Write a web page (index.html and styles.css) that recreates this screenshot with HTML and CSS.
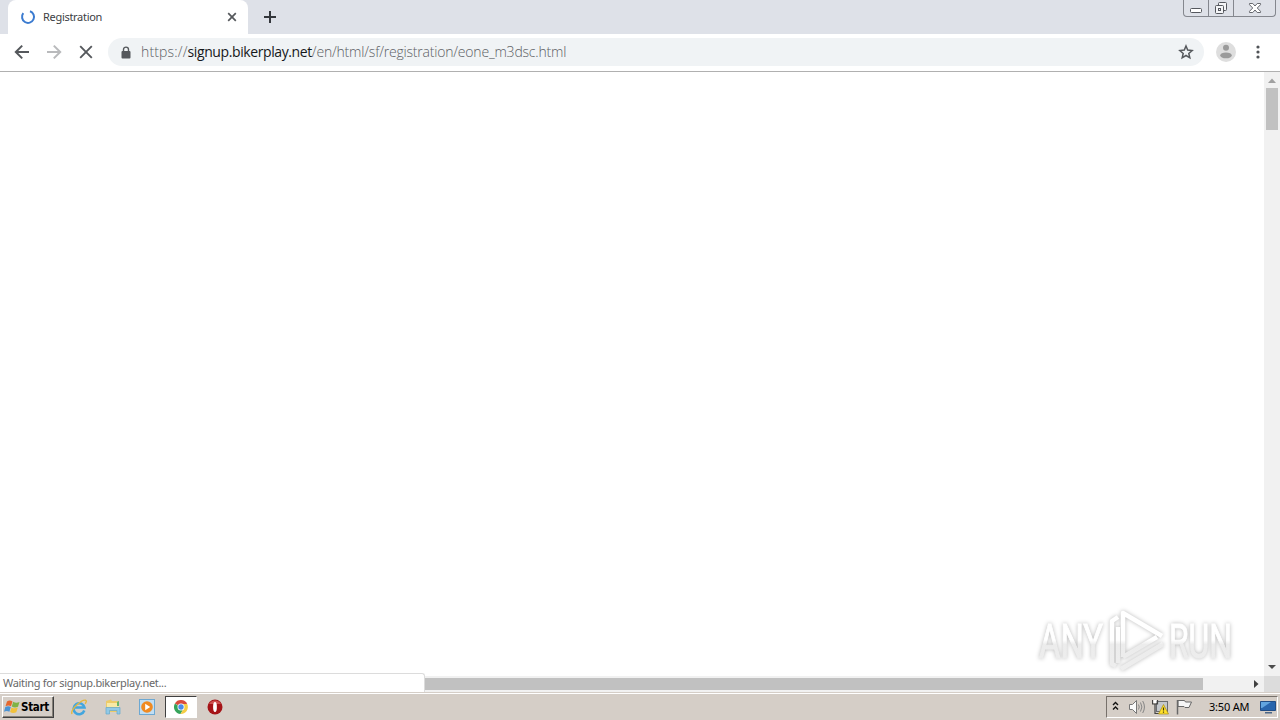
FILE: index.html
```
<!DOCTYPE html>
<html lang="en">
<head>
    <meta charset="UTF-8">
    <title>Registration</title>
    <link rel="stylesheet" href="styles.css">
</head>
<body>
    <div class="tabstrip">
        <div class="tab">
            <svg class="spinner" width="16" height="16" viewBox="0 0 16 16"><path d="M10 2.2A6 6 0 1 1 3.3 4.2" fill="none" stroke="#3b7bd0" stroke-width="2"/></svg>
            <span class="tab-title">Registration</span>
            <svg width="10" height="10" viewBox="0 0 10 10"><path d="M1.2 1.2l7.6 7.6M8.8 1.2L1.2 8.8" stroke="#55585c" stroke-width="1.7"/></svg>
        </div>
        <svg class="new-tab" width="14" height="14" viewBox="0 0 14 14"><path d="M7 1v12M1 7h12" stroke="#34373c" stroke-width="2"/></svg>
        <div class="window-buttons">
            <span class="win min"><svg width="14" height="16" viewBox="0 0 14 16"><rect x="1.5" y="8.5" width="11" height="4" rx="1" fill="#fff" stroke="#55585e"/></svg></span>
            <span class="win max"><svg width="14" height="16" viewBox="0 0 14 16"><g fill="#f4f5f7" stroke="#55585e"><rect x="4.5" y="2.5" width="8" height="8" rx="1"/><rect x="1.5" y="5.5" width="8" height="8" rx="1"/><rect x="4.5" y="8.5" width="2" height="2"/></g></svg></span>
            <span class="win close"><svg width="14" height="16" viewBox="0 0 14 16"><path d="M1.5 3.5h3.3L7 6l2.2-2.5h3.3v1.2L9.3 8l3.2 3.3v1.2H9.2L7 10l-2.2 2.5H1.5v-1.2L4.7 8 1.5 4.7z" fill="#fff" stroke="#65686e"/></svg></span>
        </div>
    </div>

    <div class="toolbar">
        <svg class="nav" width="16" height="16" viewBox="0 0 16 16"><path d="M15 8H2M8.2 1.6L1.8 8l6.4 6.4" fill="none" stroke="#55585c" stroke-width="2"/></svg>
        <svg class="nav" width="16" height="16" viewBox="0 0 16 16"><path d="M1 8h13M7.8 1.6L14.2 8l-6.4 6.4" fill="none" stroke="#b9babc" stroke-width="2"/></svg>
        <svg class="nav" width="16" height="16" viewBox="0 0 16 16"><path d="M2.2 2.2l11.6 11.6M13.8 2.2L2.2 13.8" stroke="#55585c" stroke-width="1.9"/></svg>
        <div class="address">
            <svg class="lock" width="10" height="13" viewBox="0 0 10 13"><rect x="0.5" y="5" width="9" height="7.5" rx="1" fill="#55585c"/><path d="M2.5 5.5V3.6a2.5 2.5 0 0 1 5 0v1.9" fill="none" stroke="#55585c" stroke-width="1.4"/></svg>
            <div class="url"><span class="scheme">https://</span><span class="host">signup.bikerplay.net</span><span class="path">/en/html/sf/registration/eone_m3dsc.html</span></div>
            <svg width="16" height="16" viewBox="0 0 16 16"><path d="M8 2l1.7 4.1 4.4.4-3.3 2.9 1 4.4L8 11.5l-3.8 2.3 1-4.4-3.3-2.9 4.4-.4z" fill="none" stroke="#55585c" stroke-width="1.5"/></svg>
        </div>
        <svg class="avatar" width="20" height="20" viewBox="0 0 20 20"><circle cx="10" cy="10" r="10" fill="#dedede"/><circle cx="10" cy="5.8" r="3" fill="#9a9a9a"/><ellipse cx="10" cy="13.4" rx="5.8" ry="2.9" fill="#9a9a9a"/></svg>
        <svg class="menu" width="4" height="14" viewBox="0 0 4 14"><g fill="#505357"><circle cx="2" cy="2" r="1.6"/><circle cx="2" cy="7" r="1.6"/><circle cx="2" cy="12" r="1.6"/></g></svg>
    </div>

    <div class="content">
        <div class="page">
            <svg class="watermark" width="220" height="72" viewBox="0 0 220 72">
                <defs>
                    <linearGradient id="fade" gradientUnits="userSpaceOnUse" x1="0" y1="0" x2="0" y2="72">
                        <stop offset="0.46" stop-color="#fff"/>
                        <stop offset="0.52" stop-color="#ececec"/>
                        <stop offset="1" stop-color="#eee"/>
                    </linearGradient>
                </defs>
                <g class="mark-text" fill="url(#fade)" stroke="url(#fade)">
                    <text x="8" y="51" textLength="64" lengthAdjust="spacingAndGlyphs">ANY</text>
                    <text x="138" y="51" textLength="63" lengthAdjust="spacingAndGlyphs">RUN</text>
                </g>
                <g class="mark-play" stroke="url(#fade)">
                    <path d="M92 50V6l39 23"/>
                    <path d="M87 10l-6 4v43l4 2"/>
                    <path d="M92 50l34-20"/>
                    <path d="M90 62l42-25M87 56V20"/>
                </g>
            </svg>
        </div>
        <div class="vscroll">
            <svg width="16" height="16" viewBox="0 0 16 16"><path d="M4 11l4-4.5 4 4.5z" fill="#a0a0a0"/></svg>
            <div class="vthumb"></div>
            <svg class="down" width="16" height="16" viewBox="0 0 16 16"><path d="M4 5l4 4 4-4z" fill="#4c4c4c"/></svg>
        </div>
        <div class="hscroll">
            <div class="status">Waiting for signup.bikerplay.net...</div>
            <div class="hthumb"></div>
            <svg class="right" width="16" height="16" viewBox="0 0 16 16"><path d="M6 4l4.5 4L6 12z" fill="#404040"/></svg>
        </div>
        <div class="corner"></div>
    </div>

    <div class="taskbar">
        <div class="start">
            <svg width="17" height="16" viewBox="0 0 17 16"><path d="M3 2.4c2-1.3 3.8-1 5.5 0L7 7.2C5.3 6.2 3.500 6.200 1.500 7.200z" fill="#e5672d"/><path d="M9.200 2.800c2 1.100 4 1.200 6.300.1L14 7.700c-2.200 1-4.200.9-6.200-.2z" fill="#7fb345"/><path d="M1.300 8c2-1 3.800-1 5.500 0l-1.400 4.800c-1.800-1-3.600-1-5.400 0z" fill="#4b93d3"/><path d="M7.500 8.400c2 1.100 4 1.200 6.300.1l-1.500 4.800c-2.200 1-4.200.9-6.200-.2z" fill="#f2c13b"/></svg>
            <span>Start</span>
        </div>
        <div class="quick">
            <svg width="18" height="18" viewBox="0 0 18 18"><path d="M14.300 12.500A5.500 5.500 0 1 1 14.500 9.600H5" fill="none" stroke="#43a6de" stroke-width="2.500"/><path d="M2 16C0 12 11.500 1.500 15.500 2.200c1.500.5.600 2.300-.3 3.600" fill="none" stroke="#e5b83e" stroke-width="1.400"/></svg>
        </div>
        <div class="quick">
            <svg width="18" height="18" viewBox="0 0 18 18"><path d="M2 3l5-1.500 1 1.500h7v11H2z" fill="#eccb69"/><path d="M3 5h12v4H3z" fill="#f8e9a6"/><path d="M2 16V9.500h14V16h-3v-3.500H5.500V16z" fill="#91c9e7" stroke="#64a9cd" stroke-width=".7"/><path d="M13 4l2-1v5h-2z" fill="#67b56a"/></svg>
        </div>
        <div class="quick">
            <svg width="18" height="18" viewBox="0 0 18 18"><rect x="1.500" y="1.500" width="15" height="15" fill="#c1def3" stroke="#6da8d2"/><circle cx="9" cy="9" r="5.800" fill="#f08a21"/><path d="M7.200 5.700l5 3.300-5 3.300z" fill="#fff"/></svg>
        </div>
        <div class="quick active">
            <svg width="16" height="16" viewBox="0 0 16 16"><path d="M8 8L1.900 4.500A7 7 0 0 1 14.200 5z" fill="#da4b3c"/><path d="M8 8h-1L1.900 4.500A7 7 0 0 0 7.500 15L11 9z" fill="#36a45b"/><path d="M8 5h6.200A7 7 0 0 1 7.500 15L11 9z" fill="#f5cd45"/><circle cx="8" cy="8" r="3.500" fill="#fff"/><circle cx="8" cy="8" r="2.700" fill="#4b8bea"/></svg>
        </div>
        <div class="quick">
            <svg width="16" height="16" viewBox="0 0 16 16"><circle cx="8" cy="8" r="7.500" fill="#a51317"/><path d="M2 5a7 7 0 0 1 12 0z" fill="#cf5050"/><ellipse cx="8" cy="8" rx="1.900" ry="5" fill="#fff"/></svg>
        </div>
        <div class="tray">
            <svg class="chevrons" width="7" height="10" viewBox="0 0 7 10"><path d="M1 4l2.500-2.500L6 4M1 8.500L3.500 6 6 8.500" fill="none" stroke="#111" stroke-width="1.400"/></svg>
            <svg class="volume" width="18" height="16" viewBox="0 0 18 16"><path d="M1.500 5.500h3L8.500 1.500v13l-4-4h-3z" fill="#fafafa" stroke="#777"/><path d="M10.500 5.500q1.500 2.500 0 5M12.500 3.500q2.800 4.500 0 9M14.700 2q3.500 6 0 12" fill="none" stroke="#858585"/></svg>
            <svg class="network" width="17" height="16" viewBox="0 0 17 16"><rect x="4.500" y="2.500" width="11" height="10" fill="#c4c8cc" stroke="#696c70"/><path d="M.5 1v4h5V1M3 5v9.500h5" fill="none" stroke="#444" stroke-width="1.200"/><path d="M1.500 1h3v3h-3z" fill="#fff"/><path d="M11.500 5.500l5 9.500h-10z" fill="#ffe12b" stroke="#a88d17" stroke-width=".7"/><path d="M11.500 8.500v3M11.500 12.500v1.300" stroke="#453a0c" stroke-width="1.200"/></svg>
            <svg class="flag" width="17" height="16" viewBox="0 0 17 16"><path d="M2 1.500h6.500l1 1.500h6l-2.500 5.500H9L8 7.500H2z" fill="#f6f6f6" stroke="#686868"/><path d="M1.500 1v14.500" stroke="#686868" stroke-width="1.500"/></svg>
            <span class="clock">3:50 AM</span>
            <svg class="desktop" width="16" height="14" viewBox="0 0 16 14"><path d="M.5 1.500h15v9H.5z" fill="#2865ad" stroke="#214d85"/><path d="M1 2h10L2 8H1z" fill="#61a4df"/><path d="M5 12h7v1.500H5z" fill="#4b6686"/></svg>
        </div>
    </div>
</body>
</html>
```
FILE: styles.css
```
* {
    box-sizing: border-box;
}
body {
    margin: 0;
    width: 1280px;
    height: 720px;
    overflow: hidden;
    display: flex;
    flex-direction: column;
    background: #fff;
    font-family: "DejaVu Sans Condensed", "DejaVu Sans", sans-serif;
    font-size: 11px;
    color: #3c4043;
}
svg {
    display: block;
    flex: none;
}
.tabstrip {
    height: 34px;
    flex: none;
    display: flex;
    background: #dee1e8;
    padding-left: 8px;
}
.tab {
    width: 240px;
    display: flex;
    align-items: center;
    padding: 0 11px 0 12px;
    background: #fff;
    border-radius: 8px 8px 0 0;
}
.tab-title {
    flex: 1;
    margin-left: 7px;
    padding-bottom: 2px;
    font-family: "Noto Sans", sans-serif;
    font-size: 11px;
    letter-spacing: -0.3px;
}
.new-tab {
    margin: 10px 0 0 15px;
}
.window-buttons {
    display: flex;
    height: 17px;
    margin: 0 4px 0 auto;
    border: 1px solid #84878e;
    border-top: none;
    border-radius: 0 0 4px 4px;
}
.win {
    display: flex;
    justify-content: center;
    border-right: 1px solid #84878e;
}
.min {
    width: 25px;
}
.max {
    width: 25px;
}
.close {
    width: 41px;
    border-right: none;
}
.toolbar {
    height: 38px;
    flex: none;
    display: flex;
    align-items: center;
    padding: 0 20px 1px 14px;
    border-bottom: 1px solid #b0b0b0;
}
.nav {
    margin-right: 16px;
}
.address {
    flex: 1;
    height: 28px;
    display: flex;
    align-items: center;
    margin-left: -2px;
    padding: 0 10px 0 13px;
    border-radius: 14px;
    background: #f0f3f5;
}
.url {
    flex: 1;
    margin-left: 10px;
    padding-bottom: 2px;
    font-family: "Open Sans", sans-serif;
    font-size: 14px;
    font-weight: 300;
    white-space: nowrap;
    color: #5c6064;
}
.scheme {
    letter-spacing: 0.15px;
}
.host {
    color: #15171a;
    font-weight: 400;
    letter-spacing: -0.4px;
}
.path {
    letter-spacing: -0.2px;
}
.avatar {
    margin-left: 12px;
}
.menu {
    margin-left: 20px;
}
.content {
    height: 620px;
    flex: none;
    display: grid;
    grid-template-columns: 1264px 16px;
    grid-template-rows: 604px 16px;
}
.page {
    position: relative;
    background: #fff;
}
.watermark {
    position: absolute;
    left: 1031px;
    top: 535px;
    filter: drop-shadow(0 0 2px rgba(0, 0, 0, 0.28));
}
.mark-text {
    font-family: "Roboto", sans-serif;
    font-size: 49px;
    stroke-width: 1;
}
.mark-play {
    fill: none;
    stroke-width: 4.5;
    stroke-linejoin: round;
}
.vscroll {
    display: flex;
    flex-direction: column;
    background: #f1f1f1;
}
.vthumb {
    height: 42px;
    margin: 0 2px;
    background: #c1c1c1;
}
.down {
    margin-top: auto;
}
.hscroll {
    display: flex;
    align-items: center;
    background: #f1f1f1;
}
.status {
    width: 425px;
    height: 19px;
    flex: none;
    align-self: flex-end;
    padding-left: 3px;
    border: 1px solid #dcdcdc;
    border-width: 1px 1px 0 0;
    border-radius: 0 3px 0 0;
    background: #fff;
    color: #686868;
    font-family: "Noto Sans", sans-serif;
    line-height: 18px;
    letter-spacing: -0.31px;
    z-index: 1;
}
.hthumb {
    width: 778px;
    height: 12px;
    background: #c1c1c1;
}
.right {
    margin-left: auto;
}
.corner {
    background: #dcdcdc;
}
.taskbar {
    height: 28px;
    flex: none;
    display: flex;
    align-items: center;
    padding: 1px 2px 0 2px;
    background: #d5cec7;
    border-top: 1px solid #d5cec7;
    box-shadow: inset 0 1px #fff;
}
.start {
    width: 52px;
    height: 22px;
    display: flex;
    align-items: center;
    padding-left: 1px;
    border: 1px solid;
    border-color: #fff #404040 #404040 #fff;
    box-shadow: inset -1px -1px #858078;
    font-weight: bold;
    color: #000;
}
.start span {
    font-size: 11.5px;
    letter-spacing: -0.3px;
}
.quick {
    width: 32px;
    height: 22px;
    margin-right: 2px;
    display: flex;
    align-items: center;
    justify-content: center;
}
.start + .quick {
    margin-left: 9px;
}
.quick.active {
    margin: 0 2px 0 0;
    background: #fff;
    border: 1px solid;
    border-color: #404040 #fff #fff #404040;
}
.tray {
    width: 172px;
    height: 22px;
    margin-left: auto;
    display: flex;
    align-items: center;
    padding-left: 5px;
    border: 1px solid;
    border-color: #77716b #fff #fff #77716b;
    color: #000;
}
.chevrons {
    margin-bottom: 3px;
}
.volume {
    margin-left: 9px;
}
.network {
    margin-left: 6px;
}
.flag {
    margin-left: 7px;
}
.clock {
    width: 42px;
    margin-left: 16px;
    padding-bottom: 1px;
    font-family: "Noto Sans", sans-serif;
    white-space: nowrap;
    letter-spacing: -0.2px;
}
.desktop {
    margin-left: 9px;
}
```
